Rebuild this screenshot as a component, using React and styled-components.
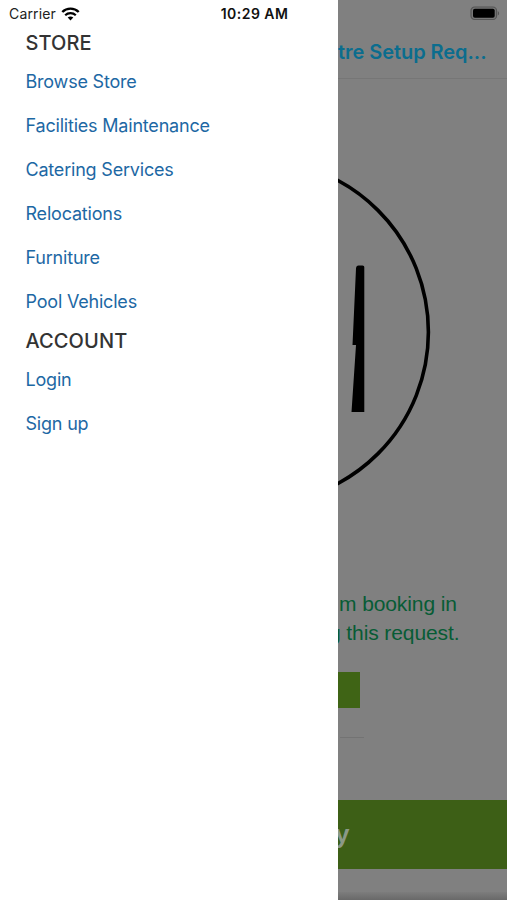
import React from 'react';
import styled, { createGlobalStyle } from 'styled-components';

const GlobalStyle = createGlobalStyle`
  * {
    box-sizing: border-box;
  }
  body {
    margin: 0;
    background: #fff;
    font-family: Inter, 'Liberation Sans', sans-serif;
  }
`;

const Screen = styled.div`
  position: relative;
  display: flex;
  width: 507px;
  height: 900px;
  overflow: hidden;
`;

const StatusBar = styled.header`
  position: absolute;
  top: 0;
  left: 0;
  right: 0;
  height: 27px;
  padding: 0 7px 0 9px;
  display: grid;
  grid-template-columns: 1fr auto 1fr;
  align-items: center;
  color: #222;
  font-size: 14px;
  line-height: 27px;
`;

const Carrier = styled.div`
  display: flex;
  align-items: center;
  gap: 5px;
  letter-spacing: 0.15px;
`;

const Clock = styled.time`
  font-size: 14px;
  font-weight: 600;
  letter-spacing: 0.45px;
  color: #111;
`;

const BatterySlot = styled.div`
  display: flex;
  justify-content: flex-end;
`;

const Drawer = styled.nav`
  flex: 0 0 338px;
  padding: 27px 26px 0 25.5px;
  background: #fff;
`;

const SectionTitle = styled.h2`
  margin: 0;
  height: 33px;
  line-height: 32px;
  font-size: 20px;
  font-weight: 500;
  letter-spacing: 0.1px;
  color: #333;
`;

const Menu = styled.ul`
  list-style: none;
  margin: 0;
  padding: 0 0 1px;
`;

const MenuLink = styled.a`
  display: block;
  height: 44px;
  line-height: 44px;
  font-size: 18px;
  letter-spacing: -0.2px;
  white-space: nowrap;
  color: #1d68a4;
  text-decoration: none;
`;

const Page = styled.main`
  flex: 1;
  min-width: 0;
  display: flex;
  flex-direction: column;
  overflow: hidden;
  background: #808080;
`;

const PageHeader = styled.div`
  height: 79px;
  padding: 38px 22px 0 0;
  border-bottom: 1px solid #767676;
  text-align: right;
  white-space: nowrap;
  font-size: 20px;
  line-height: 29px;
  font-weight: 600;
  letter-spacing: -0.05px;
  color: #0b6d8e;
`;

const Plate = styled.svg`
  display: block;
  flex: none;
`;

const Notice = styled.p`
  margin: 0;
  font-family: 'Liberation Sans', Arial, sans-serif;
  font-size: 21px;
  line-height: 29px;
  letter-spacing: -0.1px;
  color: #075c35;
  white-space: nowrap;
`;

const NoticeLine = styled.span`
  display: block;
  margin-left: ${(props) => props.$offset};
`;

const ActionButton = styled.div`
  width: 22px;
  height: 36.5px;
  margin-top: 24.5px;
  background: #3f6415;
`;

const Divider = styled.hr`
  width: 24px;
  height: 1px;
  margin: 29px 0 0 2px;
  border: 0;
  background: #737373;
`;

const BottomButton = styled.div`
  height: 69.5px;
  margin-top: 61.5px;
  background: #3d5f16;
  color: #8b9987;
  font-family: 'Liberation Sans', Arial, sans-serif;
  font-size: 26px;
  font-weight: 700;
  line-height: 68px;
  text-indent: -3px;
`;

const BottomEdge = styled.div`
  height: 8px;
  margin-top: auto;
  background: linear-gradient(#7d7d7d, #696969);
`;

const storeLinks = [
  'Browse Store',
  'Facilities Maintenance',
  'Catering Services',
  'Relocations',
  'Furniture',
  'Pool Vehicles',
];

const accountLinks = ['Login', 'Sign up'];

const WifiIcon = () => (
  <svg width="19" height="14" viewBox="0 0 18 14" fill="none">
    <path d="M0.8 5C5.3 0.5 12.7 0.5 17.2 5" stroke="#000" strokeWidth="2.4" />
    <path d="M3.7 8.2C6.6 5.4 11.4 5.4 14.3 8.2" stroke="#000" strokeWidth="2.2" />
    <path d="M6.2 10.6C7.8 9.2 10.2 9.2 11.8 10.6L9 13.4Z" fill="#000" />
  </svg>
);

const BatteryIcon = () => (
  <svg width="30" height="15" viewBox="0 0 30 15">
    <rect x="1" y="1" width="25.5" height="12.5" rx="3.6" fill="#777" stroke="#555" strokeWidth="1.2" />
    <rect x="3" y="2.8" width="21.7" height="8.9" rx="1.8" fill="#000" />
    <path d="M27.8 5v4.6c1.8-.8 1.8-3.8 0-4.6z" fill="#555" />
  </svg>
);

const CutleryPlate = () => (
  <Plate width="169" height="510" viewBox="338 79 169 510">
    <circle cx="256.4" cy="332" r="172" fill="none" stroke="#000" strokeWidth="3.6" />
    <path d="M358.5 265.5H362.5Q364.3 265.5 364.3 267V412H351.5L356 345H352.5L356 268.5Q356.2 265.5 358.5 265.5Z" fill="#000" />
  </Plate>
);

const MenuSection = ({ title, links }) => (
  <section>
    <SectionTitle>{title}</SectionTitle>
    <Menu>
      {links.map((link) => (
        <li key={link}>
          <MenuLink>{link}</MenuLink>
        </li>
      ))}
    </Menu>
  </section>
);

const App = () => {
  return (
    <>
      <GlobalStyle />
      <Screen>
        <Drawer>
          <MenuSection title="STORE" links={storeLinks} />
          <MenuSection title="ACCOUNT" links={accountLinks} />
        </Drawer>
        <Page>
          <PageHeader>tre Setup Req...</PageHeader>
          <CutleryPlate />
          <Notice>
            <NoticeLine $offset="1px">m booking in</NoticeLine>
            <NoticeLine $offset="-9px">g this request.</NoticeLine>
          </Notice>
          <ActionButton />
          <Divider />
          <BottomButton>y</BottomButton>
          <BottomEdge />
        </Page>
        <StatusBar>
          <Carrier>
            Carrier
            <WifiIcon />
          </Carrier>
          <Clock>10:29 AM</Clock>
          <BatterySlot>
            <BatteryIcon />
          </BatterySlot>
        </StatusBar>
      </Screen>
    </>
  );
};

export default App;
